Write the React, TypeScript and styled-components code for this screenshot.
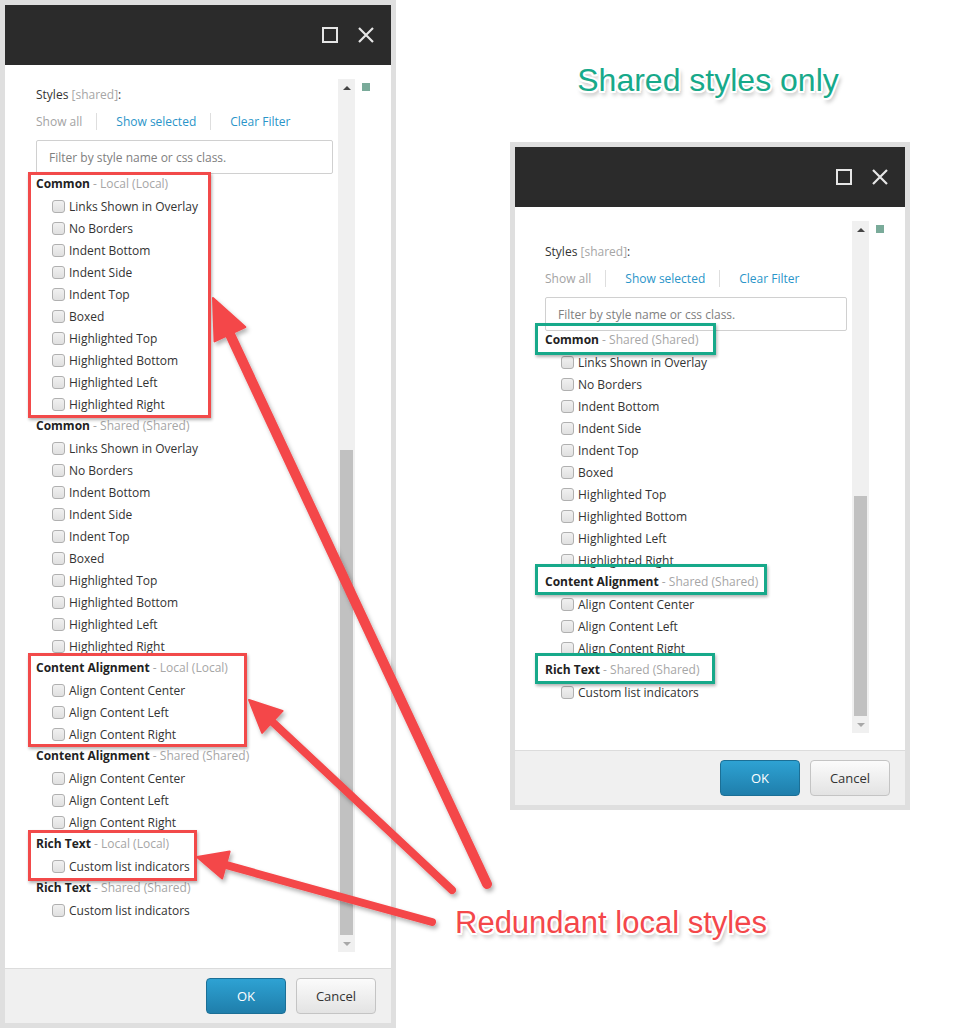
import React from "react";
import styled, { createGlobalStyle } from "styled-components";

const GlobalStyle = createGlobalStyle`
  html, body { margin: 0; padding: 0; background: #ffffff; }
  body { font-family: "Open Sans", "Liberation Sans", sans-serif; font-size: 12px; color: #333; }
  * { box-sizing: border-box; }
`;

const Page = styled.div`
  position: relative;
  width: 970px;
  height: 1028px;
  display: flex;
  align-items: flex-start;
  overflow: hidden;
  background: #fff;
`;

const Frame = styled.div`
  flex: none;
  padding: 5px;
  background: #dfdfdf;
`;

const Dialog = styled.div<{ $w: number }>`
  width: ${(p) => p.$w}px;
  background: #fff;
  display: flex;
  flex-direction: column;
`;

const Header = styled.div`
  height: 60px;
  background: #2b2b2b;
  display: flex;
  align-items: center;
  justify-content: flex-end;
  gap: 20px;
  padding-right: 17px;
`;

const Body = styled.div<{ $h: number; $pl: number; $pb: number }>`
  height: ${(p) => p.$h}px;
  display: flex;
  align-items: stretch;
  padding: 14px 21px ${(p) => p.$pb}px ${(p) => p.$pl}px;
`;

const Content = styled.div<{ $w: number; $pt: number }>`
  flex: none;
  width: ${(p) => p.$w}px;
  padding-top: ${(p) => p.$pt}px;
`;

const FieldLabel = styled.div`
  line-height: 22px;
  height: 22px;
  color: #333;
`;

const Muted = styled.span`
  color: #a6a6a6;
`;

const LinksRow = styled.div`
  margin-top: 4px;
  height: 22px;
  display: flex;
  align-items: center;
`;

const FilterLink = styled.span<{ $disabled?: boolean; $first?: boolean }>`
  line-height: 17px;
  color: ${(p) => (p.$disabled ? "#a3a3a3" : "#2a95c9")};
  padding: 0 14px 0 ${(p) => (p.$first ? 0 : 19)}px;
  border-left: ${(p) => (p.$first ? "none" : "1px solid #dedede")};
`;

const FilterInput = styled.div`
  margin-top: 8px;
  height: 34px;
  border: 1px solid #d0d0d0;
  border-radius: 2px;
  padding-left: 12px;
  display: flex;
  align-items: center;
  color: #808080;
`;

const GroupList = styled.div<{ $shift: number }>`
  margin-top: ${(p) => p.$shift}px;
`;

const GroupHeader = styled.div`
  height: 22px;
  line-height: 22px;
  white-space: nowrap;
`;

const GroupName = styled.span`
  font-weight: 700;
  color: #222;
`;

const ItemRow = styled.div`
  height: 22px;
  display: flex;
  align-items: center;
  gap: 4px;
  padding-left: 16px;
  color: #333;
  white-space: nowrap;
`;

const CheckBox = styled.span`
  flex: none;
  width: 13px;
  height: 13px;
  border: 1px solid #b0b0b0;
  border-radius: 3px;
  background: linear-gradient(#f1f1f1, #e0e0e0);
`;

const Track = styled.div`
  flex: none;
  width: 17px;
  margin-left: 5px;
  background: #f0f0f0;
  display: flex;
  flex-direction: column;
  align-items: center;
`;

const ArrowBtn = styled.div<{ $down?: boolean }>`
  flex: none;
  height: 17px;
  width: 17px;
  display: flex;
  align-items: center;
  justify-content: center;
  &::before {
    content: "";
    width: 0;
    height: 0;
    border-left: 4px solid transparent;
    border-right: 4px solid transparent;
    ${(p) =>
      p.$down
        ? "border-top: 4px solid #a8a8a8;"
        : "border-bottom: 4px solid #454545;"}
  }
`;

const TrackSpace = styled.div`
  flex: 1;
`;

const Thumb = styled.div<{ $h: number }>`
  flex: none;
  width: 13px;
  height: ${(p) => p.$h}px;
  background: #c1c1c1;
`;

const Marker = styled.div`
  flex: none;
  width: 8px;
  height: 8px;
  margin: 4px 0 0 7px;
  background: #7aab9a;
`;

const Footer = styled.div`
  height: 55px;
  border-top: 1px solid #dcdcdc;
  background: #f0f0f0;
  display: flex;
  align-items: center;
  justify-content: flex-end;
  gap: 10px;
  padding-right: 15px;
`;

const Button = styled.div<{ $primary?: boolean }>`
  width: 80px;
  height: 36px;
  border-radius: 4px;
  display: flex;
  align-items: center;
  justify-content: center;
  font-size: 13px;
  ${(p) =>
    p.$primary
      ? `background: linear-gradient(#2ea2d3, #1f7eab); border: 1px solid #1b6f96; color: #fff;`
      : `background: linear-gradient(#fbfbfb, #e3e3e3); border: 1px solid #c4c4c4; color: #333;`}
`;

const RightColumn = styled.div`
  flex: none;
  margin-left: 114px;
  padding-top: 64px;
  width: 400px;
  display: flex;
  flex-direction: column;
`;

const Title = styled.div`
  font-family: "Liberation Sans", Arial, sans-serif;
  font-size: 32px;
  line-height: 32px;
  height: 32px;
  text-align: center;
  margin-bottom: 46px;
  padding-right: 4px;
  white-space: nowrap;
  color: #17a98a;
  text-shadow: -2px 0 #fff, 2px 0 #fff, 0 -2px #fff, 0 2px #fff,
    -1.5px -1.5px #fff, 1.5px -1.5px #fff, -1.5px 1.5px #fff, 1.5px 1.5px #fff,
    2px 4px 4px rgba(0, 0, 0, 0.35);
`;

const Overlay = styled.div`
  position: absolute;
  inset: 0;
  pointer-events: none;
`;

const MarkBox = styled.div<{ $color: string }>`
  position: absolute;
  border: 3px solid ${(p) => p.$color};
  box-shadow: 1px 2px 3px rgba(0, 0, 0, 0.3);
`;

const Callout = styled.div`
  position: absolute;
  left: 455px;
  top: 907px;
  font-family: "Liberation Sans", Arial, sans-serif;
  font-size: 31px;
  line-height: 31px;
  white-space: nowrap;
  color: #f4474a;
  text-shadow: -2px 0 #fff, 2px 0 #fff, 0 -2px #fff, 0 2px #fff,
    -1.5px -1.5px #fff, 1.5px -1.5px #fff, -1.5px 1.5px #fff, 1.5px 1.5px #fff,
    2px 4px 4px rgba(0, 0, 0, 0.35);
`;

const ArrowLayer = styled.svg`
  position: absolute;
  left: 0;
  top: 0;
`;

type Group = { name: string; scope: string; items: string[] };

const commonItems = [
  "Links Shown in Overlay",
  "No Borders",
  "Indent Bottom",
  "Indent Side",
  "Indent Top",
  "Boxed",
  "Highlighted Top",
  "Highlighted Bottom",
  "Highlighted Left",
  "Highlighted Right",
];
const alignItems = ["Align Content Center", "Align Content Left", "Align Content Right"];
const richItems = ["Custom list indicators"];

const LOCAL = "Local (Local)";
const SHARED = "Shared (Shared)";

const leftGroups: Group[] = [
  { name: "Common", scope: LOCAL, items: commonItems },
  { name: "Common", scope: SHARED, items: commonItems },
  { name: "Content Alignment", scope: LOCAL, items: alignItems },
  { name: "Content Alignment", scope: SHARED, items: alignItems },
  { name: "Rich Text", scope: LOCAL, items: richItems },
  { name: "Rich Text", scope: SHARED, items: richItems },
];

const rightGroups: Group[] = [
  { name: "Common", scope: SHARED, items: commonItems },
  { name: "Content Alignment", scope: SHARED, items: alignItems },
  { name: "Rich Text", scope: SHARED, items: richItems },
];

const HeaderIcons = () => (
  <>
    <svg width="16" height="16" viewBox="0 0 16 16">
      <rect x="1" y="1" width="14" height="14" fill="none" stroke="#e6e6e6" strokeWidth="2" />
    </svg>
    <svg width="16" height="16" viewBox="0 0 16 16">
      <path d="M1 1 L15 15 M15 1 L1 15" stroke="#e6e6e6" strokeWidth="2.2" fill="none" />
    </svg>
  </>
);

type DialogProps = {
  width: number;
  bodyHeight: number;
  padLeft: number;
  padBottom: number;
  contentWidth: number;
  contentTop: number;
  listShift: number;
  thumb: number;
  groups: Group[];
};

const StylesDialog = ({
  width,
  bodyHeight,
  padLeft,
  padBottom,
  contentWidth,
  contentTop,
  listShift,
  thumb,
  groups,
}: DialogProps) => (
  <Frame>
    <Dialog $w={width}>
      <Header>
        <HeaderIcons />
      </Header>
      <Body $h={bodyHeight} $pl={padLeft} $pb={padBottom}>
        <Content $w={contentWidth} $pt={contentTop}>
          <FieldLabel>
            Styles <Muted>[shared]</Muted>:
          </FieldLabel>
          <LinksRow>
            <FilterLink $first $disabled>
              Show all
            </FilterLink>
            <FilterLink>Show selected</FilterLink>
            <FilterLink>Clear Filter</FilterLink>
          </LinksRow>
          <FilterInput>Filter by style name or css class.</FilterInput>
          <GroupList $shift={listShift}>
            {groups.map((g, gi) => (
              <React.Fragment key={gi}>
                <GroupHeader>
                  <GroupName>{g.name}</GroupName>
                  <Muted> - {g.scope}</Muted>
                </GroupHeader>
                {g.items.map((it) => (
                  <ItemRow key={it}>
                    <CheckBox />
                    <span>{it}</span>
                  </ItemRow>
                ))}
              </React.Fragment>
            ))}
          </GroupList>
        </Content>
        <Track>
          <ArrowBtn />
          <TrackSpace />
          <Thumb $h={thumb} />
          <ArrowBtn $down />
        </Track>
        <Marker />
      </Body>
      <Footer>
        <Button $primary>OK</Button>
        <Button>Cancel</Button>
      </Footer>
    </Dialog>
  </Frame>
);

type Pt = [number, number];

const Arrow = ({
  tail,
  tip,
  width,
  headLen,
  headW,
}: {
  tail: Pt;
  tip: Pt;
  width: number;
  headLen: number;
  headW: number;
}) => {
  const dx = tip[0] - tail[0];
  const dy = tip[1] - tail[1];
  const len = Math.hypot(dx, dy);
  const ux = dx / len;
  const uy = dy / len;
  const bx = tip[0] - ux * headLen;
  const by = tip[1] - uy * headLen;
  const px = -uy * (headW / 2);
  const py = ux * (headW / 2);
  const lx = tip[0] - ux * (headLen - 4);
  const ly = tip[1] - uy * (headLen - 4);
  return (
    <g>
      <line
        x1={tail[0]}
        y1={tail[1]}
        x2={lx}
        y2={ly}
        stroke="#f4474a"
        strokeWidth={width}
        strokeLinecap="round"
      />
      <polygon
        points={`${tip[0]},${tip[1]} ${bx + px},${by + py} ${bx - px},${by - py}`}
        fill="#f4474a"
        stroke="#f4474a"
        strokeWidth="2"
        strokeLinejoin="round"
      />
    </g>
  );
};

export default function App() {
  return (
    <>
      <GlobalStyle />
      <Page>
        <StylesDialog
          width={386}
          bodyHeight={903}
          padLeft={31}
          padBottom={16}
          contentWidth={297}
          contentTop={5}
          listShift={-1}
          thumb={485}
          groups={leftGroups}
        />
        <RightColumn>
          <Title>Shared styles only</Title>
          <StylesDialog
            width={390}
            bodyHeight={543}
            padLeft={30}
            padBottom={17}
            contentWidth={302}
            contentTop={20}
            listShift={-2}
            thumb={220}
            groups={rightGroups}
          />
        </RightColumn>
        <Overlay>
          <MarkBox $color="#f24a4a" style={{ left: 28, top: 172, width: 183, height: 246 }} />
          <MarkBox $color="#f24a4a" style={{ left: 28, top: 653, width: 219, height: 94 }} />
          <MarkBox $color="#f24a4a" style={{ left: 28, top: 830, width: 169, height: 51 }} />
          <MarkBox $color="#17a98a" style={{ left: 535, top: 323, width: 181, height: 32 }} />
          <MarkBox $color="#17a98a" style={{ left: 535, top: 564, width: 232, height: 31 }} />
          <MarkBox $color="#17a98a" style={{ left: 535, top: 653, width: 180, height: 31 }} />
          <ArrowLayer width="970" height="1028" viewBox="0 0 970 1028">
            <defs>
              <filter id="arrowShadow" x="-10%" y="-10%" width="130%" height="130%">
                <feDropShadow dx="2" dy="3" stdDeviation="2" floodColor="#000" floodOpacity="0.3" />
              </filter>
            </defs>
            <g filter="url(#arrowShadow)">
              <Arrow tail={[487, 884]} tip={[213, 298]} width={10} headLen={40} headW={34} />
              <Arrow tail={[452, 890]} tip={[249, 700]} width={8} headLen={32} headW={30} />
              <Arrow tail={[432, 922]} tip={[197, 857]} width={8} headLen={30} headW={28} />
            </g>
          </ArrowLayer>
          <Callout>Redundant local styles</Callout>
        </Overlay>
      </Page>
    </>
  );
}
